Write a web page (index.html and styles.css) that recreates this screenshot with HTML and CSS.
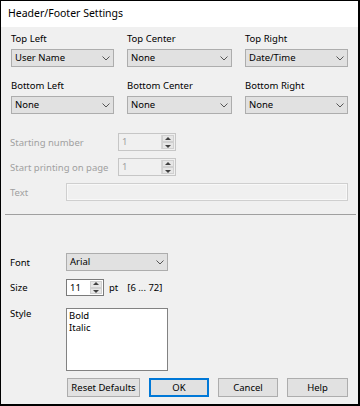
FILE: index.html
```html
<!DOCTYPE html>
<html lang="en">
<head>
  <meta charset="UTF-8">
  <meta name="viewport" content="width=device-width, initial-scale=1.0">
  <title>Header/Footer Settings</title>
  <link rel="stylesheet" href="styles.css">
</head>
<body>

  <div class="window">
    <div class="titlebar">Header/Footer Settings</div>

    <div class="pickers">
      <div class="field">
        <div class="label">Top Left</div>
        <div class="select">User Name<svg class="chev" viewBox="0 0 8 5"><path d="M0.5 0.5 L4 4 L7.5 0.5"/></svg></div>
      </div>
      <div class="field">
        <div class="label">Top Center</div>
        <div class="select">None<svg class="chev" viewBox="0 0 8 5"><path d="M0.5 0.5 L4 4 L7.5 0.5"/></svg></div>
      </div>
      <div class="field">
        <div class="label">Top Right</div>
        <div class="select">Date/Time<svg class="chev" viewBox="0 0 8 5"><path d="M0.5 0.5 L4 4 L7.5 0.5"/></svg></div>
      </div>
      <div class="field">
        <div class="label">Bottom Left</div>
        <div class="select">None<svg class="chev" viewBox="0 0 8 5"><path d="M0.5 0.5 L4 4 L7.5 0.5"/></svg></div>
      </div>
      <div class="field">
        <div class="label">Bottom Center</div>
        <div class="select">None<svg class="chev" viewBox="0 0 8 5"><path d="M0.5 0.5 L4 4 L7.5 0.5"/></svg></div>
      </div>
      <div class="field">
        <div class="label">Bottom Right</div>
        <div class="select">None<svg class="chev" viewBox="0 0 8 5"><path d="M0.5 0.5 L4 4 L7.5 0.5"/></svg></div>
      </div>
    </div>

    <div class="numbering">
      <div class="row disabled">
        <div class="row-label wide">Starting number</div>
        <div class="spin off">
          <span class="spin-value">1</span>
          <span class="spin-btns"><span class="up"></span><span class="down"></span></span>
        </div>
      </div>
      <div class="row disabled">
        <div class="row-label wide">Start printing on page</div>
        <div class="spin off">
          <span class="spin-value">1</span>
          <span class="spin-btns"><span class="up"></span><span class="down"></span></span>
        </div>
      </div>
      <div class="row disabled">
        <div class="row-label">Text</div>
        <div class="textbox off"></div>
      </div>
    </div>

    <div class="separator"></div>

    <div class="fontbox">
      <div class="row">
        <div class="row-label">Font</div>
        <div class="select font-select">Arial<svg class="chev" viewBox="0 0 8 5"><path d="M0.5 0.5 L4 4 L7.5 0.5"/></svg></div>
      </div>
      <div class="row size-row">
        <div class="row-label">Size</div>
        <div class="spin size-spin">
          <span class="spin-value">11</span>
          <span class="spin-btns"><span class="up"></span><span class="down"></span></span>
        </div>
        <span class="unit">pt</span>
        <span class="range">[6 ... 72]</span>
      </div>
      <div class="row style-row">
        <div class="row-label">Style</div>
        <div class="listbox">
          <div>Bold</div>
          <div>Italic</div>
        </div>
      </div>
      <div class="buttons">
        <button class="btn reset">Reset Defaults</button>
        <button class="btn ok">OK</button>
        <button class="btn">Cancel</button>
        <button class="btn help">Help</button>
      </div>
    </div>
  </div>

</body>
</html>
```
FILE: styles.css
```css
body {
  margin: 0;
  padding: 0;
  background: #ffffff;
  font-family: 'Noto Sans', 'Liberation Sans', sans-serif;
  font-size: 9.5px;
  color: #000;
}

.window {
  width: 360px;
  height: 406px;
  box-sizing: border-box;
  border-top: 1px solid #000;
  border-left: 1px solid #000;
  border-right: 2px solid #000;
  border-bottom: 2px solid #000;
  background-color: #f0f0f0;
  overflow: hidden;
}

.titlebar {
  height: 26px;
  line-height: 24px;
  padding-left: 7px;
  background-color: #fff;
  font-size: 10.5px;
}

/* header / footer choosers */
.pickers {
  display: grid;
  grid-template-columns: 103px 105px 103px;
  column-gap: 13px;
  row-gap: 12px;
  padding: 5px 10px 0 10px;
}

.label {
  height: 14px;
  line-height: 14px;
  margin-bottom: 3px;
}

.select {
  position: relative;
  height: 18px;
  line-height: 16px;
  box-sizing: border-box;
  border: 1px solid #adadad;
  background-color: #e1e1e1;
  padding-left: 3px;
}

.chev {
  position: absolute;
  right: 3px;
  top: 6px;
  width: 8px;
  height: 5px;
  fill: none;
  stroke: #555;
  stroke-width: 1;
}

/* page numbering (disabled) */
.numbering {
  padding: 19px 10px 0 9px;
  display: flex;
  flex-direction: column;
  gap: 7px;
}

.row {
  display: flex;
  align-items: center;
}

.row-label {
  width: 56px;
  flex-shrink: 0;
}

.row-label.wide {
  width: 108px;
}

.disabled {
  color: #a0a0a0;
}

.spin {
  display: flex;
  height: 18px;
  width: 58px;
  box-sizing: border-box;
  border: 1px solid #c6c6c6;
  background-color: #f0f0f0;
}

.spin-value {
  flex: 1;
  line-height: 16px;
  padding-left: 3px;
}

.spin-btns {
  display: flex;
  flex-direction: column;
  width: 12px;
  border-left: 1px solid #d6d6d6;
  margin: 1px 1px 1px 0;
}

.spin-btns span {
  flex: 1;
  position: relative;
  background-color: #e6e6e6;
  border: 1px solid #d0d0d0;
}

.spin-btns .up::after,
.spin-btns .down::after {
  content: '';
  position: absolute;
  left: 50%;
  top: 50%;
  margin-left: -3px;
  border-left: 3px solid transparent;
  border-right: 3px solid transparent;
}

.spin-btns .up::after {
  margin-top: -2px;
  border-bottom: 3px solid #404040;
}

.spin-btns .down::after {
  margin-top: -1px;
  border-top: 3px solid #404040;
}

.textbox {
  width: 282px;
  height: 18px;
  box-sizing: border-box;
  border: 1px solid #cfcfcf;
  box-shadow: inset 0 0 0 1px #f8f8f8;
}

.separator {
  margin: 13px 2px 0 4px;
  height: 1px;
  background-color: #a0a0a0;
}

/* font settings */
.fontbox {
  padding: 38px 10px 0 9px;
  display: flex;
  flex-direction: column;
}

.font-select {
  width: 102px;
}

.size-row {
  margin-top: 8px;
}

.size-spin {
  width: 38px;
  height: 17px;
  border-color: #7a7a7a;
  background-color: #fff;
}

.size-spin .spin-btns {
  border-left: none;
}

.unit {
  margin-left: 5px;
}

.range {
  margin-left: 9px;
}

.style-row {
  margin-top: 12px;
  align-items: flex-start;
}

.style-row .row-label {
  line-height: 12px;
}

.listbox {
  width: 102px;
  height: 63px;
  box-sizing: border-box;
  border: 1px solid #828282;
  background-color: #fff;
  padding: 1px 2px;
  line-height: 12px;
}

.buttons {
  display: flex;
  gap: 9px;
  margin: 7px 0 0 57px;
}

.btn {
  height: 19px;
  width: 60px;
  padding: 0;
  box-sizing: border-box;
  border: 1px solid #adadad;
  background-color: #e1e1e1;
  font-family: inherit;
  font-size: 9.5px;
  color: #000;
}

.btn.reset {
  width: 73px;
}

.btn.help {
  width: 61px;
}

.btn.ok {
  border: 2px solid #0078d7;
}
```
